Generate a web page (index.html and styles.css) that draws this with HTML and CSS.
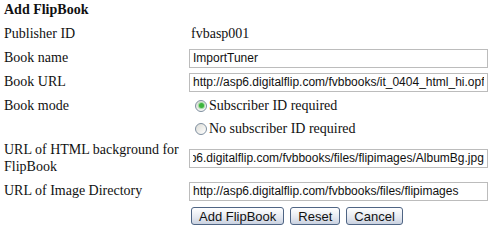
FILE: index.html
```html
<!DOCTYPE html>
<html lang="en">

<head>
    <meta charset="UTF-8">
    <title>Add FlipBook</title>
    <link rel="stylesheet" href="styles.css">
</head>

<body>
    <h3 class="title">Add FlipBook</h3>
    <table class="form">
        <tr class="row">
            <td class="label">Publisher ID</td>
            <td class="value">fvbasp001</td>
        </tr>
        <tr class="row">
            <td class="label">Book name</td>
            <td><input class="field" type="text" value="ImportTuner"></td>
        </tr>
        <tr class="row">
            <td class="label">Book URL</td>
            <td><input class="field" type="text" value="http://asp6.digitalflip.com/fvbbooks/it_0404_html_hi.opf"></td>
        </tr>
        <tr class="row small">
            <td class="label">Book mode</td>
            <td class="radio"><label><input type="radio" name="mode" checked>Subscriber ID required</label></td>
        </tr>
        <tr class="row small">
            <td></td>
            <td class="radio"><label><input type="radio" name="mode">No subscriber ID required</label></td>
        </tr>
        <tr class="row tall">
            <td class="label">URL of HTML background for FlipBook</td>
            <td><input class="field" id="bg" type="text" value="http://asp6.digitalflip.com/fvbbooks/files/flipimages/AlbumBg.jpg"></td>
        </tr>
        <tr class="row dir">
            <td class="label">URL of Image Directory</td>
            <td><input class="field" type="text" value="http://asp6.digitalflip.com/fvbbooks/files/flipimages"></td>
        </tr>
        <tr>
            <td></td>
            <td class="buttons">
                <button type="button">Add FlipBook</button>
                <button type="button">Reset</button>
                <button type="button">Cancel</button>
            </td>
        </tr>
    </table>
    <script>
        // the background url is scrolled to its end, as in the original box
        let bg = document.getElementById('bg');
        bg.scrollLeft = bg.scrollWidth;
    </script>
</body>

</html>
```

FILE: styles.css
```css
body {
    margin: 0;
    padding: 2px 4px;
    background: #fff;
    color: #111;
    font-family: "Liberation Serif", "Times New Roman", serif;
    font-size: 14px;
}

.title {
    margin: 0 0 4px;
    font-size: 14px;
    line-height: 16px;
    font-weight: bold;
}

.form {
    border-collapse: collapse;
}

.form td {
    padding: 0;
    vertical-align: middle;
}

.row td {
    height: 24px;
}

.row.small td {
    height: 23px;
}

.row.tall td {
    height: 36px;
    line-height: 17px;
}

.row.dir td {
    height: 30px;
}

.form .label {
    width: 183px;
    padding-right: 2px;
}

.form .value {
    padding-left: 2px;
}

.field {
    display: block;
    box-sizing: border-box;
    width: 299px;
    height: 19px;
    margin: 0;
    padding: 0 3px;
    border: 1px solid #bcbcbc;
    font-family: "Liberation Sans", Arial, sans-serif;
    font-size: 12px;
    color: #111;
}

.radio label {
    display: flex;
    align-items: center;
    padding-left: 6px;
}

.radio input {
    appearance: none;
    -webkit-appearance: none;
    display: grid;
    place-items: center;
    box-sizing: border-box;
    width: 12px;
    height: 12px;
    margin: 0 2px 0 0;
    border: 1px solid #7f8fa0;
    border-radius: 50%;
    background: linear-gradient(135deg, #dcdcd6, #ffffff);
}

.radio input:checked:before {
    content: "";
    width: 5px;
    height: 5px;
    border-radius: 50%;
    background: #3cb43c;
    box-shadow: 0 0 1px 1px #9ad79a;
}

.buttons {
    display: flex;
    gap: 6px;
    padding: 1px 0 0 2px !important;
}

.buttons button {
    height: 18px;
    padding: 0 7px;
    border: 1px solid #4f6584;
    border-radius: 3px;
    background: linear-gradient(#ffffff, #e4e8f0 60%, #c9d1e0);
    font-family: "Liberation Sans", Arial, sans-serif;
    font-size: 13px;
    color: #111;
}
```
